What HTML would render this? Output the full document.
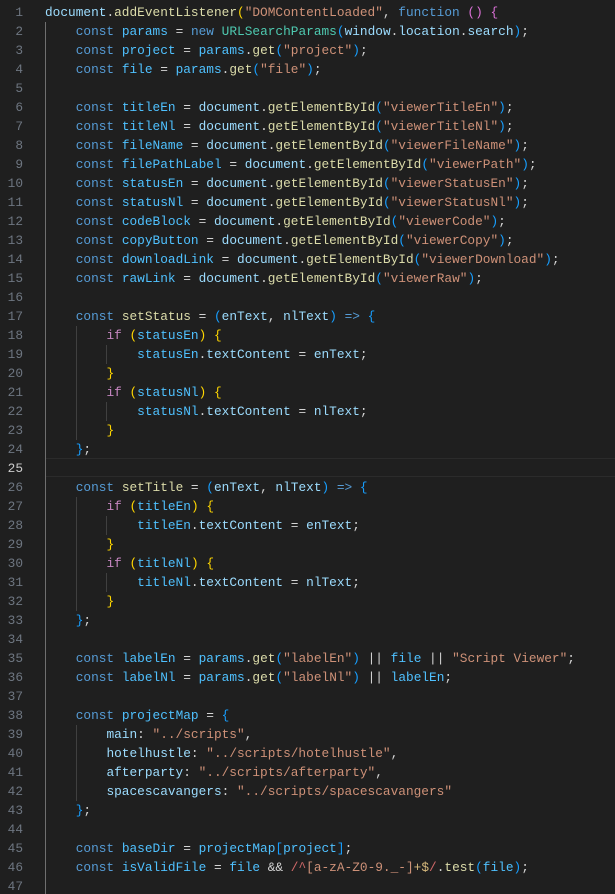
<!DOCTYPE html>
<html><head><meta charset="utf-8"><style>
html,body{margin:0;padding:0;background:#1f1f1f;width:615px;height:894px;overflow:hidden}
.wrap{position:relative;width:615px;height:894px}
.hl{position:absolute;left:45px;right:0;top:458px;height:17px;border-top:1px solid #2b2b2b;border-bottom:1px solid #2b2b2b}
.ln{position:absolute;left:0;top:3px;width:23px;text-align:right;font:12.8px/19px "Liberation Mono",monospace;color:#6e7681;white-space:pre}
.ln b{font-weight:normal;color:#cccccc}
pre{position:absolute;left:45px;top:3px;margin:0;font:12.8px/19px "Liberation Mono",monospace;color:#d4d4d4;white-space:pre}
i{display:inline-block;width:30.72px;height:19px;vertical-align:top;box-shadow:inset 1px 0 #404040}
i.a{box-shadow:inset 1px 0 #6f6f6f}
.k{color:#569cd6}.v{color:#9cdcfe}.C{color:#4fc1ff}.f{color:#dcdcaa}.s{color:#ce9178}.c{color:#c586c0}.t{color:#4ec9b0}
.y{color:#ffd700}.p{color:#da70d6}.b{color:#179fff}.r{color:#d16969}.q{color:#d7ba7d}
</style></head><body><div class="wrap">
<div class="hl"></div>
<div class="ln">1
2
3
4
5
6
7
8
9
10
11
12
13
14
15
16
17
18
19
20
21
22
23
24
<b>25</b>
26
27
28
29
30
31
32
33
34
35
36
37
38
39
40
41
42
43
44
45
46
47</div>
<pre><span class="v">document</span>.<span class="f">addEventListener</span><span class="y">(</span><span class="s">"DOMContentLoaded"</span>, <span class="k">function</span> <span class="p">()</span> <span class="p">{</span>
<i class="a"></i><span class="k">const</span> <span class="C">params</span> = <span class="k">new</span> <span class="t">URLSearchParams</span><span class="b">(</span><span class="v">window</span>.<span class="v">location</span>.<span class="v">search</span><span class="b">)</span>;
<i class="a"></i><span class="k">const</span> <span class="C">project</span> = <span class="C">params</span>.<span class="f">get</span><span class="b">(</span><span class="s">"project"</span><span class="b">)</span>;
<i class="a"></i><span class="k">const</span> <span class="C">file</span> = <span class="C">params</span>.<span class="f">get</span><span class="b">(</span><span class="s">"file"</span><span class="b">)</span>;
<i class="a"></i>
<i class="a"></i><span class="k">const</span> <span class="C">titleEn</span> = <span class="v">document</span>.<span class="f">getElementById</span><span class="b">(</span><span class="s">"viewerTitleEn"</span><span class="b">)</span>;
<i class="a"></i><span class="k">const</span> <span class="C">titleNl</span> = <span class="v">document</span>.<span class="f">getElementById</span><span class="b">(</span><span class="s">"viewerTitleNl"</span><span class="b">)</span>;
<i class="a"></i><span class="k">const</span> <span class="C">fileName</span> = <span class="v">document</span>.<span class="f">getElementById</span><span class="b">(</span><span class="s">"viewerFileName"</span><span class="b">)</span>;
<i class="a"></i><span class="k">const</span> <span class="C">filePathLabel</span> = <span class="v">document</span>.<span class="f">getElementById</span><span class="b">(</span><span class="s">"viewerPath"</span><span class="b">)</span>;
<i class="a"></i><span class="k">const</span> <span class="C">statusEn</span> = <span class="v">document</span>.<span class="f">getElementById</span><span class="b">(</span><span class="s">"viewerStatusEn"</span><span class="b">)</span>;
<i class="a"></i><span class="k">const</span> <span class="C">statusNl</span> = <span class="v">document</span>.<span class="f">getElementById</span><span class="b">(</span><span class="s">"viewerStatusNl"</span><span class="b">)</span>;
<i class="a"></i><span class="k">const</span> <span class="C">codeBlock</span> = <span class="v">document</span>.<span class="f">getElementById</span><span class="b">(</span><span class="s">"viewerCode"</span><span class="b">)</span>;
<i class="a"></i><span class="k">const</span> <span class="C">copyButton</span> = <span class="v">document</span>.<span class="f">getElementById</span><span class="b">(</span><span class="s">"viewerCopy"</span><span class="b">)</span>;
<i class="a"></i><span class="k">const</span> <span class="C">downloadLink</span> = <span class="v">document</span>.<span class="f">getElementById</span><span class="b">(</span><span class="s">"viewerDownload"</span><span class="b">)</span>;
<i class="a"></i><span class="k">const</span> <span class="C">rawLink</span> = <span class="v">document</span>.<span class="f">getElementById</span><span class="b">(</span><span class="s">"viewerRaw"</span><span class="b">)</span>;
<i class="a"></i>
<i class="a"></i><span class="k">const</span> <span class="f">setStatus</span> = <span class="b">(</span><span class="v">enText</span>, <span class="v">nlText</span><span class="b">)</span> <span class="k">=&gt;</span> <span class="b">{</span>
<i class="a"></i><i></i><span class="c">if</span> <span class="y">(</span><span class="C">statusEn</span><span class="y">)</span> <span class="y">{</span>
<i class="a"></i><i></i><i></i><span class="C">statusEn</span>.<span class="v">textContent</span> = <span class="v">enText</span>;
<i class="a"></i><i></i><span class="y">}</span>
<i class="a"></i><i></i><span class="c">if</span> <span class="y">(</span><span class="C">statusNl</span><span class="y">)</span> <span class="y">{</span>
<i class="a"></i><i></i><i></i><span class="C">statusNl</span>.<span class="v">textContent</span> = <span class="v">nlText</span>;
<i class="a"></i><i></i><span class="y">}</span>
<i class="a"></i><span class="b">}</span>;
<i class="a"></i>
<i class="a"></i><span class="k">const</span> <span class="f">setTitle</span> = <span class="b">(</span><span class="v">enText</span>, <span class="v">nlText</span><span class="b">)</span> <span class="k">=&gt;</span> <span class="b">{</span>
<i class="a"></i><i></i><span class="c">if</span> <span class="y">(</span><span class="C">titleEn</span><span class="y">)</span> <span class="y">{</span>
<i class="a"></i><i></i><i></i><span class="C">titleEn</span>.<span class="v">textContent</span> = <span class="v">enText</span>;
<i class="a"></i><i></i><span class="y">}</span>
<i class="a"></i><i></i><span class="c">if</span> <span class="y">(</span><span class="C">titleNl</span><span class="y">)</span> <span class="y">{</span>
<i class="a"></i><i></i><i></i><span class="C">titleNl</span>.<span class="v">textContent</span> = <span class="v">nlText</span>;
<i class="a"></i><i></i><span class="y">}</span>
<i class="a"></i><span class="b">}</span>;
<i class="a"></i>
<i class="a"></i><span class="k">const</span> <span class="C">labelEn</span> = <span class="C">params</span>.<span class="f">get</span><span class="b">(</span><span class="s">"labelEn"</span><span class="b">)</span> || <span class="C">file</span> || <span class="s">"Script Viewer"</span>;
<i class="a"></i><span class="k">const</span> <span class="C">labelNl</span> = <span class="C">params</span>.<span class="f">get</span><span class="b">(</span><span class="s">"labelNl"</span><span class="b">)</span> || <span class="C">labelEn</span>;
<i class="a"></i>
<i class="a"></i><span class="k">const</span> <span class="C">projectMap</span> = <span class="b">{</span>
<i class="a"></i><i></i><span class="v">main</span>: <span class="s">"../scripts"</span>,
<i class="a"></i><i></i><span class="v">hotelhustle</span>: <span class="s">"../scripts/hotelhustle"</span>,
<i class="a"></i><i></i><span class="v">afterparty</span>: <span class="s">"../scripts/afterparty"</span>,
<i class="a"></i><i></i><span class="v">spacescavangers</span>: <span class="s">"../scripts/spacescavangers"</span>
<i class="a"></i><span class="b">}</span>;
<i class="a"></i>
<i class="a"></i><span class="k">const</span> <span class="C">baseDir</span> = <span class="C">projectMap</span><span class="b">[</span><span class="C">project</span><span class="b">]</span>;
<i class="a"></i><span class="k">const</span> <span class="C">isValidFile</span> = <span class="C">file</span> &amp;&amp; <span class="r">/^</span><span class="s">[a-zA-Z0-9._-]</span><span class="q">+$</span><span class="r">/</span>.<span class="f">test</span><span class="b">(</span><span class="C">file</span><span class="b">)</span>;
<i class="a"></i></pre>
</div></body></html>
